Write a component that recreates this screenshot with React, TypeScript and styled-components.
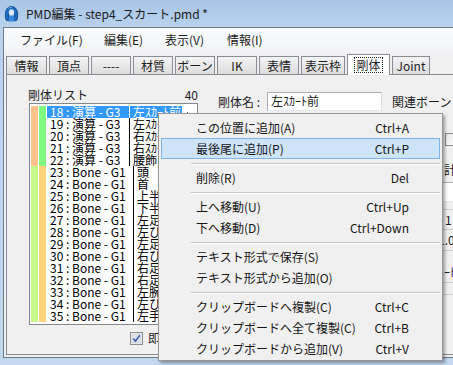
import React from "react";
import styled, { createGlobalStyle } from "styled-components";

const GlobalStyle = createGlobalStyle`
  html, body {
    margin: 0;
    padding: 0;
  }
  body {
    width: 453px;
    height: 365px;
    overflow: hidden;
    background: #bcd4ed;
    font-family: "Noto Sans CJK JP", "Noto Sans", sans-serif;
    font-size: 12px;
    color: #1b1b1b;
  }
`;

const Frame = styled.div`
  position: relative;
  width: 453px;
  height: 365px;
  background: linear-gradient(180deg, #a9c6e6 0%, #bad3ed 8%, #c1d8ef 100%);
  overflow: hidden;
`;

const TitleBar = styled.div`
  height: 27px;
  display: flex;
  align-items: center;
  gap: 7px;
  padding-left: 4px;
  line-height: 14px;
  color: #1a1a1a;
`;

const Client = styled.div`
  margin-left: 3px;
  height: 329px;
  border: 1px solid #6c7a89;
  border-right: none;
  background: #f0f0f0;
  display: flex;
  flex-direction: column;
`;

const MenuBar = styled.div`
  height: 24px;
  display: flex;
  align-items: center;
  padding-left: 6px;
  background: linear-gradient(180deg, #fbfcfd 0%, #f1f3f6 100%);
`;

const MenuBarItem = styled.span<{ $w?: number }>`
  box-sizing: border-box;
  width: ${(p) => (p.$w ? `${p.$w}px` : "auto")};
  padding-left: 10px;
  line-height: 16px;
  white-space: nowrap;
`;

const TabStrip = styled.div`
  height: 22px;
  display: flex;
  align-items: flex-end;
  gap: 2px;
  padding-left: 2px;
  position: relative;
  z-index: 1;
`;

const Tab = styled.div<{ $w: number; $active?: boolean }>`
  width: ${(p) => p.$w}px;
  height: ${(p) => (p.$active ? 21 : 18)}px;
  margin-bottom: ${(p) => (p.$active ? -1 : 0)}px;
  box-sizing: border-box;
  border: 1px solid #898c95;
  border-bottom: none;
  background: ${(p) =>
    p.$active ? "#ffffff" : "linear-gradient(180deg, #f4f4f4 0%, #e9e9e9 50%, #dcdcdc 100%)"};
  display: flex;
  align-items: center;
  justify-content: center;
  line-height: 14px;
`;

const FocusLabel = styled.span`
  outline: 1px dotted #222;
  outline-offset: 0;
  padding: 0 1px;
`;

const TabPage = styled.div`
  margin-left: 2px;
  height: 281px;
  box-sizing: border-box;
  border: 1px solid #898c95;
  border-right: none;
  background: #f0f0f0;
  display: flex;
  align-items: flex-start;
  padding: 13px 0 0 22px;
`;

const LeftColumn = styled.div`
  width: 175px;
  display: flex;
  flex-direction: column;
`;

const ListHeader = styled.div`
  display: flex;
  justify-content: space-between;
  width: 170px;
  margin-left: -1px;
  height: 15px;
  line-height: 14px;
`;

const ListBox = styled.div`
  height: 222px;
  box-sizing: border-box;
  border: 1px solid #828790;
  background: #ffffff;
  padding-top: 2px;
  overflow: hidden;
  position: relative;
`;

const Row = styled.div`
  display: flex;
  height: 12px;
  line-height: 12px;
  white-space: pre;
`;

const Swatch = styled.span<{ $c: string }>`
  width: 7px;
  margin-left: 1px;
  background: ${(p) => p.$c};
`;

const RowText = styled.span<{ $sel?: boolean }>`
  display: flex;
  margin-left: 1px;
  padding-left: 3px;
  background: ${(p) => (p.$sel ? "#3399ff" : "transparent")};
  color: ${(p) => (p.$sel ? "#ffffff" : "#000000")};
`;

const RowLabel = styled.span<{ $w: number }>`
  width: ${(p) => p.$w}px;
`;

const RowName = styled.span`
  border-left: 1px solid currentColor;
  padding: 0 1px 0 3px;
`;

const ScrollDot = styled.span`
  position: absolute;
  right: 9px;
  top: 8px;
  width: 1px;
  height: 1px;
  background: #555;
`;

const ListFooter = styled.div`
  display: flex;
  align-items: center;
  gap: 5px;
  padding-left: 101px;
  margin-top: 6px;
  height: 14px;
  line-height: 14px;
`;

const RightColumn = styled.div`
  margin-left: 20px;
  margin-top: 4px;
  display: flex;
  flex-direction: column;
  white-space: nowrap;
`;

const FieldRow = styled.div`
  display: flex;
  align-items: center;
  height: 19px;
`;

const FieldLabel = styled.span<{ $w?: number }>`
  width: ${(p) => (p.$w ? `${p.$w}px` : "auto")};
  flex-shrink: 0;
  line-height: 14px;
`;

const TextBox = styled.div<{ $w: number; $h?: number }>`
  width: ${(p) => p.$w}px;
  height: ${(p) => p.$h || 19}px;
  box-sizing: border-box;
  flex-shrink: 0;
  border: 1px solid #abadb3;
  border-right-color: #dbdfe6;
  border-bottom-color: #e3e9ef;
  background: #ffffff;
  padding-left: 3px;
  line-height: 16px;
`;

const Trailing = styled.span`
  margin-left: 10px;
  line-height: 14px;
`;

const ParamRow = styled.div<{ $h: number; $line?: boolean; $top?: boolean }>`
  display: flex;
  align-items: flex-end;
  height: ${(p) => p.$h}px;
  box-sizing: border-box;
  border-top: ${(p) => (p.$top ? "1px solid #cfcfcf" : "none")};
  border-bottom: ${(p) => (p.$line ? "1px solid #cfcfcf" : "none")};
  line-height: 14px;
`;

const ParamSpacer = styled.span`
  width: 225px;
  flex-shrink: 0;
`;

const SmallBox = styled.span`
  width: 13px;
  height: 13px;
  box-sizing: border-box;
  border: 1px solid #8f8f8f;
  background: linear-gradient(135deg, #e6e6e6, #ffffff);
  margin-left: 2px;
`;

const GridCells = styled.div`
  margin-top: 7px;
  margin-left: 219px;
  width: 40px;
`;

const GridCell = styled.span<{ $indent: number }>`
  margin-left: ${(p) => p.$indent}px;
  align-self: center;
`;

const ContextMenu = styled.div`
  position: absolute;
  left: 158px;
  top: 113px;
  width: 285px;
  box-sizing: border-box;
  border: 1px solid #979797;
  background: #f0f0f0;
  padding: 3px 2px 1px 2px;
  box-shadow: 2px 2px 3px rgba(0, 0, 0, 0.35);
  z-index: 10;
`;

const MenuItem = styled.div<{ $active?: boolean }>`
  height: 21px;
  box-sizing: border-box;
  display: flex;
  align-items: center;
  justify-content: space-between;
  padding: 0 30px 0 34px;
  line-height: 14px;
  color: #141414;
  border: 1px solid ${(p) => (p.$active ? "#7eb4ea" : "transparent")};
  background: ${(p) => (p.$active ? "#cde4f9" : "transparent")};
`;

const MenuSep = styled.div`
  height: 8px;
  display: flex;
  align-items: center;
  padding-left: 30px;

  &::before {
    content: "";
    flex: 1;
    height: 1px;
    background: #c5c5c5;
    box-shadow: 0 1px 0 #ffffff;
  }
`;

const AppIcon = () => (
  <svg width="15" height="16" viewBox="0 0 15 16">
    <path
      d="M2 14 C1 10 1 6 2.5 3.5 C4 1 6 0.5 7.5 0.5 C9 0.5 11 1 12.5 3.5 C14 6 14 10 13 14 L10.5 15 L10.5 8 L4.5 8 L4.5 15 Z"
      fill="#1c6cc4"
      stroke="#0f3f7a"
      strokeWidth="0.8"
    />
    <ellipse cx="7.5" cy="6.5" rx="2.6" ry="3.2" fill="#dfeaf6" />
    <path d="M5 9.5 L10 9.5 L10.5 15.5 L4.5 15.5 Z" fill="#3a8be0" />
    <path d="M4 2.5 C5 1.5 6.5 1.2 8 1.4" stroke="#8ec3f5" strokeWidth="0.8" fill="none" />
  </svg>
);

const CheckIcon = () => (
  <svg width="13" height="13" viewBox="0 0 13 13">
    <rect x="0.5" y="0.5" width="12" height="12" fill="#f4f4f4" stroke="#8e8f8f" />
    <rect x="2" y="2" width="9" height="9" fill="#dfe4ec" stroke="#c4cbd6" strokeWidth="0.6" />
    <path d="M3.3 6.6 L5.4 9.2 L9.8 3.3" stroke="#3f5fa8" strokeWidth="1.6" fill="none" />
  </svg>
);

type Body = { no: number; kind: string; g: string; name: string; sel?: boolean };

const bodies: Body[] = [
  { no: 18, kind: "演算", g: "G3", name: "左ｽｶｰﾄ前", sel: true },
  { no: 19, kind: "演算", g: "G3", name: "左ｽｶｰﾄ後" },
  { no: 20, kind: "演算", g: "G3", name: "右ｽｶｰﾄ前" },
  { no: 21, kind: "演算", g: "G3", name: "右ｽｶｰﾄ後" },
  { no: 22, kind: "演算", g: "G3", name: "腰飾り" },
  { no: 23, kind: "Bone", g: "G1", name: "頭" },
  { no: 24, kind: "Bone", g: "G1", name: "首" },
  { no: 25, kind: "Bone", g: "G1", name: "上半身" },
  { no: 26, kind: "Bone", g: "G1", name: "下半身" },
  { no: 27, kind: "Bone", g: "G1", name: "左足" },
  { no: 28, kind: "Bone", g: "G1", name: "左ひざ" },
  { no: 29, kind: "Bone", g: "G1", name: "左足首" },
  { no: 30, kind: "Bone", g: "G1", name: "右ひざ" },
  { no: 31, kind: "Bone", g: "G1", name: "右足" },
  { no: 32, kind: "Bone", g: "G1", name: "右足首" },
  { no: 33, kind: "Bone", g: "G1", name: "左腕" },
  { no: 34, kind: "Bone", g: "G1", name: "左ひじ" },
  { no: 35, kind: "Bone", g: "G1", name: "左手首" },
];

const menus = [
  { label: "ファイル(F)", w: 84 },
  { label: "編集(E)", w: 61 },
  { label: "表示(V)", w: 62 },
  { label: "情報(I)" },
];

const tabs = [
  { label: "情報", w: 41 },
  { label: "頂点", w: 40 },
  { label: "----", w: 40 },
  { label: "材質", w: 40 },
  { label: "ボーン", w: 40 },
  { label: "IK", w: 40 },
  { label: "表情", w: 40 },
  { label: "表示枠", w: 44 },
  { label: "剛体", w: 43, active: true },
  { label: "Joint", w: 38 },
];

type Entry = { label: string; key?: string; active?: boolean } | "sep";

const menuEntries: Entry[] = [
  { label: "この位置に追加(A)", key: "Ctrl+A" },
  { label: "最後尾に追加(P)", key: "Ctrl+P", active: true },
  "sep",
  { label: "削除(R)", key: "Del" },
  "sep",
  { label: "上へ移動(U)", key: "Ctrl+Up" },
  { label: "下へ移動(D)", key: "Ctrl+Down" },
  "sep",
  { label: "テキスト形式で保存(S)" },
  { label: "テキスト形式から追加(O)" },
  "sep",
  { label: "クリップボードへ複製(C)", key: "Ctrl+C" },
  { label: "クリップボードへ全て複製(C)", key: "Ctrl+B" },
  { label: "クリップボードから追加(V)", key: "Ctrl+V" },
];

const gridRows = [
  { h: 21, value: "1", indent: 8, line: true, top: true },
  { h: 21, value: "1.0", indent: 1, line: true },
  { h: 11, value: "", indent: 0 },
  { h: 21, value: "ﾒｰﾄﾙ", indent: 1, line: true },
  { h: 12, value: "", indent: 0, line: true },
];

export default function App() {
  return (
    <Frame>
      <GlobalStyle />
      <TitleBar>
        <AppIcon />
        <span>PMD編集 - step4_スカート.pmd *</span>
      </TitleBar>
      <Client>
        <MenuBar>
          {menus.map((m) => (
            <MenuBarItem key={m.label} $w={m.w}>
              {m.label}
            </MenuBarItem>
          ))}
        </MenuBar>
        <TabStrip>
          {tabs.map((t) => (
            <Tab key={t.label} $w={t.w} $active={t.active}>
              {t.active ? <FocusLabel>{t.label}</FocusLabel> : t.label}
            </Tab>
          ))}
        </TabStrip>
        <TabPage>
          <LeftColumn>
            <ListHeader>
              <span>剛体リスト</span>
              <span>40</span>
            </ListHeader>
            <ListBox>
              <ScrollDot />
              {bodies.map((b) => {
                const g3 = b.kind !== "Bone";
                return (
                  <Row key={b.no}>
                    <Swatch $c={g3 ? "#ffc48e" : "#c8fa8c"} />
                    <Swatch $c={g3 ? "#80fa80" : "#ffd27c"} />
                    <RowText $sel={b.sel}>
                      <RowLabel $w={g3 ? 79 : 83}>{`${b.no} : ${b.kind} - ${b.g}`}</RowLabel>
                      <RowName>{b.name}</RowName>
                    </RowText>
                  </Row>
                );
              })}
            </ListBox>
            <ListFooter>
              <CheckIcon />
              <span>即時反映</span>
            </ListFooter>
          </LeftColumn>
          <RightColumn>
            <FieldRow>
              <FieldLabel $w={49}>剛体名 :</FieldLabel>
              <TextBox $w={115}>左ｽｶｰﾄ前</TextBox>
              <Trailing>関連ボーン</Trailing>
            </FieldRow>
            <ParamRow $h={35}>
              <ParamSpacer />
              <SmallBox />
            </ParamRow>
            <ParamRow $h={31}>
              <ParamSpacer />
              <span style={{ marginLeft: 1 }}>計算</span>
            </ParamRow>
            <ParamRow $h={25}>
              <ParamSpacer />
              <TextBox $w={40} $h={20} style={{ marginLeft: -1 }} />
            </ParamRow>
            <GridCells>
              {gridRows.map((r, i) => (
                <ParamRow key={i} $h={r.h} $line={r.line} $top={r.top}>
                  <GridCell $indent={r.indent}>{r.value}</GridCell>
                </ParamRow>
              ))}
            </GridCells>
          </RightColumn>
        </TabPage>
      </Client>
      <ContextMenu>
        {menuEntries.map((e, i) =>
          e === "sep" ? (
            <MenuSep key={i} />
          ) : (
            <MenuItem key={i} $active={e.active}>
              <span>{e.label}</span>
              <span>{e.key}</span>
            </MenuItem>
          )
        )}
      </ContextMenu>
    </Frame>
  );
}
